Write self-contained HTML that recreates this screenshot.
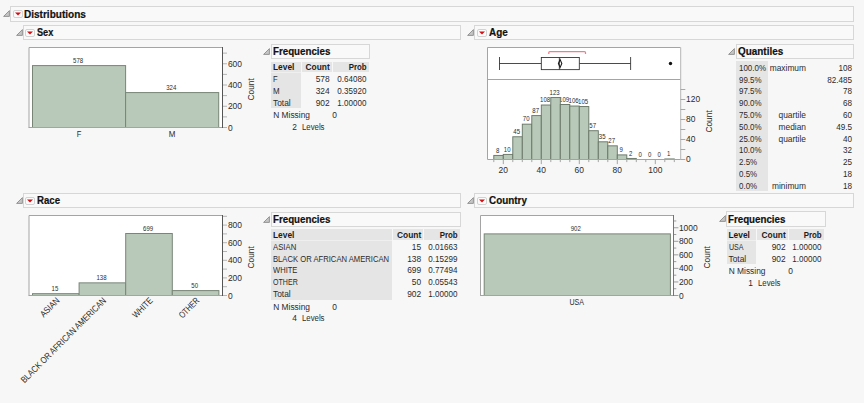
<!DOCTYPE html>
<html><head><meta charset="utf-8"><title>Distributions</title>
<style>
html,body{margin:0;padding:0;}
body{width:864px;height:403px;background:#f7f7f7;position:relative;overflow:hidden;font-family:"Liberation Sans",sans-serif;color:#2b2b2b;}
.abs{position:absolute;}
.hbox{box-sizing:border-box;border:1px solid #d7d7d7;background:#f9f9f9;}
.h1{font-weight:bold;font-size:10.6px;color:#111;white-space:nowrap;transform-origin:0 50%;-webkit-text-stroke:0.2px #111;}
.t{font-size:8.4px;white-space:nowrap;line-height:12px;height:12px;}
.b{font-weight:bold;color:#1c1c1c;}
.r{text-align:right;}
.sh{background:#e5e5e5;}
svg{overflow:visible;}
svg text{font-family:"Liberation Sans",sans-serif;fill:#2b2b2b;}
</style></head><body>

<svg class="abs" style="left:3px;top:9.8px" width="7" height="7" viewBox="0 0 7 7"><path d="M0.6 6.4 L6.4 6.4 L6.4 0.6 Z" fill="#c6c6c6" stroke="#8c8c8c" stroke-width="0.9"/></svg><div class="abs hbox" style="left:9.8px;top:5.8px;width:844.4px;height:15.8px"></div><svg class="abs" style="left:12.6px;top:9.5px" width="10" height="8" viewBox="0 0 10 8"><rect x="0.5" y="0.5" width="9" height="7" rx="1.5" ry="1.5" fill="#fbfbfb" stroke="#d2d2d2" stroke-width="1"/><path d="M2 2.6 L8 2.6 L5 5.6 Z" fill="#d40f14"/></svg><div class="abs h1" style="left:23.6px;top:5.8px;line-height:16.4px;transform:scaleX(0.947)">Distributions</div>
<svg class="abs" style="left:15.8px;top:28.9px" width="7" height="7" viewBox="0 0 7 7"><path d="M0.6 6.4 L6.4 6.4 L6.4 0.6 Z" fill="#c6c6c6" stroke="#8c8c8c" stroke-width="0.9"/></svg><div class="abs hbox" style="left:22.6px;top:24.9px;width:438.7px;height:15.6px"></div><svg class="abs" style="left:25.4px;top:28.6px" width="10" height="8" viewBox="0 0 10 8"><rect x="0.5" y="0.5" width="9" height="7" rx="1.5" ry="1.5" fill="#fbfbfb" stroke="#d2d2d2" stroke-width="1"/><path d="M2 2.6 L8 2.6 L5 5.6 Z" fill="#d40f14"/></svg><div class="abs h1" style="left:36.9px;top:23.9px;line-height:16.2px;transform:scaleX(0.862)">Sex</div>
<svg class="abs" style="left:467.3px;top:28.9px" width="7" height="7" viewBox="0 0 7 7"><path d="M0.6 6.4 L6.4 6.4 L6.4 0.6 Z" fill="#c6c6c6" stroke="#8c8c8c" stroke-width="0.9"/></svg><div class="abs hbox" style="left:474.1px;top:24.9px;width:380.1px;height:15.6px"></div><svg class="abs" style="left:476.9px;top:28.6px" width="10" height="8" viewBox="0 0 10 8"><rect x="0.5" y="0.5" width="9" height="7" rx="1.5" ry="1.5" fill="#fbfbfb" stroke="#d2d2d2" stroke-width="1"/><path d="M2 2.6 L8 2.6 L5 5.6 Z" fill="#d40f14"/></svg><div class="abs h1" style="left:488.9px;top:23.9px;line-height:16.2px;transform:scaleX(0.936)">Age</div>
<svg class="abs" style="left:15.8px;top:197.0px" width="7" height="7" viewBox="0 0 7 7"><path d="M0.6 6.4 L6.4 6.4 L6.4 0.6 Z" fill="#c6c6c6" stroke="#8c8c8c" stroke-width="0.9"/></svg><div class="abs hbox" style="left:22.6px;top:193.0px;width:438.7px;height:15.4px"></div><svg class="abs" style="left:25.4px;top:196.7px" width="10" height="8" viewBox="0 0 10 8"><rect x="0.5" y="0.5" width="9" height="7" rx="1.5" ry="1.5" fill="#fbfbfb" stroke="#d2d2d2" stroke-width="1"/><path d="M2 2.6 L8 2.6 L5 5.6 Z" fill="#d40f14"/></svg><div class="abs h1" style="left:36.9px;top:192.0px;line-height:16.0px;transform:scaleX(0.908)">Race</div>
<svg class="abs" style="left:467.3px;top:197.0px" width="7" height="7" viewBox="0 0 7 7"><path d="M0.6 6.4 L6.4 6.4 L6.4 0.6 Z" fill="#c6c6c6" stroke="#8c8c8c" stroke-width="0.9"/></svg><div class="abs hbox" style="left:474.1px;top:193.0px;width:380.1px;height:15.4px"></div><svg class="abs" style="left:476.9px;top:196.7px" width="10" height="8" viewBox="0 0 10 8"><rect x="0.5" y="0.5" width="9" height="7" rx="1.5" ry="1.5" fill="#fbfbfb" stroke="#d2d2d2" stroke-width="1"/><path d="M2 2.6 L8 2.6 L5 5.6 Z" fill="#d40f14"/></svg><div class="abs h1" style="left:488.8px;top:192.0px;line-height:16.0px;transform:scaleX(0.933)">Country</div>
<svg class="abs" style="left:0;top:0" width="864" height="403" viewBox="0 0 864 403"><rect x="29" y="47.5" width="193.5" height="80.0" fill="#fff" stroke="none"/>
<text transform="translate(78.15 62.99) scale(0.84 1)" font-size="7.2" text-anchor="middle">578</text>
<rect x="32.50" y="65.59" width="93.10" height="61.91" fill="#b9c9b9" stroke="#778576" stroke-width="1"/>
<text transform="translate(79.05 137.00) scale(0.831 1)" font-size="9.1" text-anchor="middle">F</text>
<text transform="translate(171.25 89.98) scale(0.84 1)" font-size="7.2" text-anchor="middle">324</text>
<rect x="125.60" y="92.58" width="93.10" height="34.92" fill="#b9c9b9" stroke="#778576" stroke-width="1"/>
<text transform="translate(172.15 137.00) scale(0.877 1)" font-size="9.1" text-anchor="middle">M</text>
<path d="M29 127.5 L29 47.5 L222.5 47.5" fill="none" stroke="#a4a4a4" stroke-width="1"/>
<line x1="28.5" y1="127.5" x2="222.5" y2="127.5" stroke="#a4a4a4" stroke-width="1"/>
<line x1="222.5" y1="127.50" x2="227.0" y2="127.50" stroke="#b4b4b4" stroke-width="1"/>
<text transform="translate(227.90 130.55) scale(0.93 1)" font-size="9.1" text-anchor="start">0</text>
<line x1="222.5" y1="116.88" x2="227.0" y2="116.88" stroke="#b4b4b4" stroke-width="1"/>
<line x1="222.5" y1="106.25" x2="227.0" y2="106.25" stroke="#b4b4b4" stroke-width="1"/>
<text transform="translate(227.90 109.30) scale(0.93 1)" font-size="9.1" text-anchor="start">200</text>
<line x1="222.5" y1="95.62" x2="227.0" y2="95.62" stroke="#b4b4b4" stroke-width="1"/>
<line x1="222.5" y1="85.00" x2="227.0" y2="85.00" stroke="#b4b4b4" stroke-width="1"/>
<text transform="translate(227.90 88.05) scale(0.93 1)" font-size="9.1" text-anchor="start">400</text>
<line x1="222.5" y1="74.38" x2="227.0" y2="74.38" stroke="#b4b4b4" stroke-width="1"/>
<line x1="222.5" y1="63.75" x2="227.0" y2="63.75" stroke="#b4b4b4" stroke-width="1"/>
<text transform="translate(227.90 66.80) scale(0.93 1)" font-size="9.1" text-anchor="start">600</text>
<line x1="222.5" y1="53.12" x2="227.0" y2="53.12" stroke="#b4b4b4" stroke-width="1"/>
<line x1="222.5" y1="47.0" x2="222.5" y2="128.0" stroke="#555" stroke-width="1"/>
<text x="250.8" y="89.3" font-size="8.4" text-anchor="middle" transform="rotate(-90 250.8 89.3)" dy="3">Count</text>
<rect x="29" y="215.5" width="193.5" height="80.0" fill="#fff" stroke="none"/>
<text transform="translate(54.90 291.08) scale(0.84 1)" font-size="7.2" text-anchor="middle">15</text>
<rect x="32.50" y="293.68" width="46.60" height="1.82" fill="#b9c9b9" stroke="#778576" stroke-width="1"/>
<text transform="translate(55.60 296.70) rotate(-45) scale(0.854 1)" font-size="9.1" text-anchor="end" dy="6.4">ASIAN</text>
<text transform="translate(101.50 280.26) scale(0.84 1)" font-size="7.2" text-anchor="middle">138</text>
<rect x="79.10" y="282.86" width="46.60" height="12.64" fill="#b9c9b9" stroke="#778576" stroke-width="1"/>
<text transform="translate(102.20 296.70) rotate(-45) scale(0.844 1)" font-size="9.1" text-anchor="end" dy="6.4">BLACK OR AFRICAN AMERICAN</text>
<text transform="translate(148.10 230.89) scale(0.84 1)" font-size="7.2" text-anchor="middle">699</text>
<rect x="125.70" y="233.49" width="46.60" height="62.01" fill="#b9c9b9" stroke="#778576" stroke-width="1"/>
<text transform="translate(148.80 296.70) rotate(-45) scale(0.835 1)" font-size="9.1" text-anchor="end" dy="6.4">WHITE</text>
<text transform="translate(194.70 288.00) scale(0.84 1)" font-size="7.2" text-anchor="middle">50</text>
<rect x="172.30" y="290.60" width="46.60" height="4.90" fill="#b9c9b9" stroke="#778576" stroke-width="1"/>
<text transform="translate(195.40 296.70) rotate(-45) scale(0.780 1)" font-size="9.1" text-anchor="end" dy="6.4">OTHER</text>
<path d="M29 295.5 L29 215.5 L222.5 215.5" fill="none" stroke="#a4a4a4" stroke-width="1"/>
<line x1="28.5" y1="295.5" x2="222.5" y2="295.5" stroke="#a4a4a4" stroke-width="1"/>
<line x1="222.5" y1="295.50" x2="227.0" y2="295.50" stroke="#b4b4b4" stroke-width="1"/>
<text transform="translate(227.90 298.55) scale(0.93 1)" font-size="9.1" text-anchor="start">0</text>
<line x1="222.5" y1="286.70" x2="227.0" y2="286.70" stroke="#b4b4b4" stroke-width="1"/>
<line x1="222.5" y1="277.90" x2="227.0" y2="277.90" stroke="#b4b4b4" stroke-width="1"/>
<text transform="translate(227.90 280.95) scale(0.93 1)" font-size="9.1" text-anchor="start">200</text>
<line x1="222.5" y1="269.10" x2="227.0" y2="269.10" stroke="#b4b4b4" stroke-width="1"/>
<line x1="222.5" y1="260.30" x2="227.0" y2="260.30" stroke="#b4b4b4" stroke-width="1"/>
<text transform="translate(227.90 263.35) scale(0.93 1)" font-size="9.1" text-anchor="start">400</text>
<line x1="222.5" y1="251.50" x2="227.0" y2="251.50" stroke="#b4b4b4" stroke-width="1"/>
<line x1="222.5" y1="242.70" x2="227.0" y2="242.70" stroke="#b4b4b4" stroke-width="1"/>
<text transform="translate(227.90 245.75) scale(0.93 1)" font-size="9.1" text-anchor="start">600</text>
<line x1="222.5" y1="233.90" x2="227.0" y2="233.90" stroke="#b4b4b4" stroke-width="1"/>
<line x1="222.5" y1="225.10" x2="227.0" y2="225.10" stroke="#b4b4b4" stroke-width="1"/>
<text transform="translate(227.90 228.15) scale(0.93 1)" font-size="9.1" text-anchor="start">800</text>
<line x1="222.5" y1="216.30" x2="227.0" y2="216.30" stroke="#b4b4b4" stroke-width="1"/>
<line x1="222.5" y1="215.0" x2="222.5" y2="296.0" stroke="#555" stroke-width="1"/>
<text x="251.3" y="257.3" font-size="8.4" text-anchor="middle" transform="rotate(-90 251.3 257.3)" dy="3">Count</text>
<rect x="480.5" y="215.5" width="193.0" height="80.0" fill="#fff" stroke="none"/>
<text transform="translate(575.80 231.29) scale(0.84 1)" font-size="7.2" text-anchor="middle">902</text>
<rect x="484.20" y="233.89" width="186.20" height="61.61" fill="#b9c9b9" stroke="#778576" stroke-width="1"/>
<text transform="translate(576.70 305.00) scale(0.780 1)" font-size="9.1" text-anchor="middle">USA</text>
<path d="M480.5 295.5 L480.5 215.5 L673.5 215.5" fill="none" stroke="#a4a4a4" stroke-width="1"/>
<line x1="480.0" y1="295.5" x2="673.5" y2="295.5" stroke="#a4a4a4" stroke-width="1"/>
<line x1="673.5" y1="295.50" x2="678.4" y2="295.50" stroke="#9c9c9c" stroke-width="1"/>
<text transform="translate(678.90 298.55) scale(0.93 1)" font-size="9.1" text-anchor="start">0</text>
<line x1="673.5" y1="288.73" x2="676.3" y2="288.73" stroke="#9c9c9c" stroke-width="1"/>
<line x1="673.5" y1="281.95" x2="678.4" y2="281.95" stroke="#9c9c9c" stroke-width="1"/>
<text transform="translate(678.90 285.00) scale(0.93 1)" font-size="9.1" text-anchor="start">200</text>
<line x1="673.5" y1="275.18" x2="676.3" y2="275.18" stroke="#9c9c9c" stroke-width="1"/>
<line x1="673.5" y1="268.40" x2="678.4" y2="268.40" stroke="#9c9c9c" stroke-width="1"/>
<text transform="translate(678.90 271.45) scale(0.93 1)" font-size="9.1" text-anchor="start">400</text>
<line x1="673.5" y1="261.62" x2="676.3" y2="261.62" stroke="#9c9c9c" stroke-width="1"/>
<line x1="673.5" y1="254.85" x2="678.4" y2="254.85" stroke="#9c9c9c" stroke-width="1"/>
<text transform="translate(678.90 257.90) scale(0.93 1)" font-size="9.1" text-anchor="start">600</text>
<line x1="673.5" y1="248.07" x2="676.3" y2="248.07" stroke="#9c9c9c" stroke-width="1"/>
<line x1="673.5" y1="241.30" x2="678.4" y2="241.30" stroke="#9c9c9c" stroke-width="1"/>
<text transform="translate(678.90 244.35) scale(0.93 1)" font-size="9.1" text-anchor="start">800</text>
<line x1="673.5" y1="234.53" x2="676.3" y2="234.53" stroke="#9c9c9c" stroke-width="1"/>
<line x1="673.5" y1="227.75" x2="678.4" y2="227.75" stroke="#9c9c9c" stroke-width="1"/>
<text transform="translate(678.90 230.80) scale(0.93 1)" font-size="9.1" text-anchor="start">1000</text>
<line x1="673.5" y1="220.97" x2="676.3" y2="220.97" stroke="#9c9c9c" stroke-width="1"/>
<line x1="673.5" y1="215.0" x2="673.5" y2="296.0" stroke="#747474" stroke-width="1"/>
<text x="706.7" y="257.3" font-size="8.4" text-anchor="middle" transform="rotate(-90 706.7 257.3)" dy="3">Count</text>
<rect x="487.5" y="47.5" width="193.0" height="112.0" fill="#fff"/>
<text transform="translate(497.65 152.62) scale(0.84 1)" font-size="7.2" text-anchor="middle">8</text>
<text transform="translate(507.15 151.61) scale(0.84 1)" font-size="7.2" text-anchor="middle">10</text>
<text transform="translate(516.65 133.97) scale(0.84 1)" font-size="7.2" text-anchor="middle">45</text>
<text transform="translate(526.15 121.37) scale(0.84 1)" font-size="7.2" text-anchor="middle">70</text>
<text transform="translate(535.65 112.80) scale(0.84 1)" font-size="7.2" text-anchor="middle">87</text>
<text transform="translate(545.15 102.22) scale(0.84 1)" font-size="7.2" text-anchor="middle">108</text>
<text transform="translate(554.65 94.66) scale(0.84 1)" font-size="7.2" text-anchor="middle">123</text>
<text transform="translate(564.15 101.71) scale(0.84 1)" font-size="7.2" text-anchor="middle">109</text>
<text transform="translate(573.65 103.23) scale(0.84 1)" font-size="7.2" text-anchor="middle">106</text>
<text transform="translate(583.15 103.73) scale(0.84 1)" font-size="7.2" text-anchor="middle">105</text>
<text transform="translate(592.65 127.92) scale(0.84 1)" font-size="7.2" text-anchor="middle">57</text>
<text transform="translate(602.15 139.01) scale(0.84 1)" font-size="7.2" text-anchor="middle">35</text>
<text transform="translate(611.65 143.04) scale(0.84 1)" font-size="7.2" text-anchor="middle">27</text>
<text transform="translate(621.15 152.11) scale(0.84 1)" font-size="7.2" text-anchor="middle">9</text>
<text transform="translate(630.65 155.64) scale(0.84 1)" font-size="7.2" text-anchor="middle">2</text>
<text transform="translate(640.15 156.65) scale(0.84 1)" font-size="7.2" text-anchor="middle">0</text>
<text transform="translate(649.65 156.65) scale(0.84 1)" font-size="7.2" text-anchor="middle">0</text>
<text transform="translate(659.15 156.65) scale(0.84 1)" font-size="7.2" text-anchor="middle">0</text>
<text transform="translate(668.65 156.15) scale(0.84 1)" font-size="7.2" text-anchor="middle">1</text>
<rect x="493.80" y="155.42" width="9.5" height="4.08" fill="#b9c9b9" stroke="#687767" stroke-width="0.95"/>
<rect x="503.30" y="154.41" width="9.5" height="5.09" fill="#b9c9b9" stroke="#687767" stroke-width="0.95"/>
<rect x="512.80" y="136.77" width="9.5" height="22.73" fill="#b9c9b9" stroke="#687767" stroke-width="0.95"/>
<rect x="522.30" y="124.17" width="9.5" height="35.33" fill="#b9c9b9" stroke="#687767" stroke-width="0.95"/>
<rect x="531.80" y="115.60" width="9.5" height="43.90" fill="#b9c9b9" stroke="#687767" stroke-width="0.95"/>
<rect x="541.30" y="105.02" width="9.5" height="54.48" fill="#b9c9b9" stroke="#687767" stroke-width="0.95"/>
<rect x="550.80" y="97.46" width="9.5" height="62.04" fill="#b9c9b9" stroke="#687767" stroke-width="0.95"/>
<rect x="560.30" y="104.51" width="9.5" height="54.99" fill="#b9c9b9" stroke="#687767" stroke-width="0.95"/>
<rect x="569.80" y="106.03" width="9.5" height="53.47" fill="#b9c9b9" stroke="#687767" stroke-width="0.95"/>
<rect x="579.30" y="106.53" width="9.5" height="52.97" fill="#b9c9b9" stroke="#687767" stroke-width="0.95"/>
<rect x="588.80" y="130.72" width="9.5" height="28.78" fill="#b9c9b9" stroke="#687767" stroke-width="0.95"/>
<rect x="598.30" y="141.81" width="9.5" height="17.69" fill="#b9c9b9" stroke="#687767" stroke-width="0.95"/>
<rect x="607.80" y="145.84" width="9.5" height="13.66" fill="#b9c9b9" stroke="#687767" stroke-width="0.95"/>
<rect x="617.30" y="154.91" width="9.5" height="4.59" fill="#b9c9b9" stroke="#687767" stroke-width="0.95"/>
<rect x="626.80" y="158.44" width="9.5" height="1.06" fill="#b9c9b9" stroke="#687767" stroke-width="0.95"/>
<rect x="664.80" y="158.95" width="9.5" height="0.55" fill="#b9c9b9" stroke="#687767" stroke-width="0.95"/>
<path d="M487.5 159.5 L487.5 47.5 L680.5 47.5" fill="none" stroke="#a4a4a4"/>
<line x1="487.5" y1="79.5" x2="680.5" y2="79.5" stroke="#a4a4a4"/>
<line x1="487.5" y1="159.5" x2="680.5" y2="159.5" stroke="#a4a4a4"/>
<line x1="680.7" y1="47.5" x2="680.7" y2="160.0" stroke="#b6b6b6"/>
<line x1="493.80" y1="159.5" x2="493.80" y2="162.1" stroke="#a4a4a4"/>
<line x1="503.30" y1="159.5" x2="503.30" y2="164.1" stroke="#a4a4a4"/>
<text transform="translate(503.30 173.30) scale(0.93 1)" font-size="9.1" text-anchor="middle">20</text>
<line x1="512.80" y1="159.5" x2="512.80" y2="162.1" stroke="#a4a4a4"/>
<line x1="522.30" y1="159.5" x2="522.30" y2="162.1" stroke="#a4a4a4"/>
<line x1="531.80" y1="159.5" x2="531.80" y2="162.1" stroke="#a4a4a4"/>
<line x1="541.30" y1="159.5" x2="541.30" y2="164.1" stroke="#a4a4a4"/>
<text transform="translate(541.30 173.30) scale(0.93 1)" font-size="9.1" text-anchor="middle">40</text>
<line x1="550.80" y1="159.5" x2="550.80" y2="162.1" stroke="#a4a4a4"/>
<line x1="560.30" y1="159.5" x2="560.30" y2="162.1" stroke="#a4a4a4"/>
<line x1="569.80" y1="159.5" x2="569.80" y2="162.1" stroke="#a4a4a4"/>
<line x1="579.30" y1="159.5" x2="579.30" y2="164.1" stroke="#a4a4a4"/>
<text transform="translate(579.30 173.30) scale(0.93 1)" font-size="9.1" text-anchor="middle">60</text>
<line x1="588.80" y1="159.5" x2="588.80" y2="162.1" stroke="#a4a4a4"/>
<line x1="598.30" y1="159.5" x2="598.30" y2="162.1" stroke="#a4a4a4"/>
<line x1="607.80" y1="159.5" x2="607.80" y2="162.1" stroke="#a4a4a4"/>
<line x1="617.30" y1="159.5" x2="617.30" y2="164.1" stroke="#a4a4a4"/>
<text transform="translate(617.30 173.30) scale(0.93 1)" font-size="9.1" text-anchor="middle">80</text>
<line x1="626.80" y1="159.5" x2="626.80" y2="162.1" stroke="#a4a4a4"/>
<line x1="636.30" y1="159.5" x2="636.30" y2="162.1" stroke="#a4a4a4"/>
<line x1="645.80" y1="159.5" x2="645.80" y2="162.1" stroke="#a4a4a4"/>
<line x1="655.30" y1="159.5" x2="655.30" y2="164.1" stroke="#a4a4a4"/>
<text transform="translate(655.30 173.30) scale(0.93 1)" font-size="9.1" text-anchor="middle">100</text>
<line x1="664.80" y1="159.5" x2="664.80" y2="162.1" stroke="#a4a4a4"/>
<line x1="674.30" y1="159.5" x2="674.30" y2="162.1" stroke="#a4a4a4"/>
<line x1="680.5" y1="159.5" x2="685.3" y2="159.5" stroke="#a8a8a8"/>
<text transform="translate(686.10 162.30) scale(0.93 1)" font-size="9.1" text-anchor="start">0</text>
<line x1="680.5" y1="149.5" x2="685.3" y2="149.5" stroke="#a8a8a8"/>
<line x1="680.5" y1="139.5" x2="685.3" y2="139.5" stroke="#a8a8a8"/>
<text transform="translate(686.10 142.30) scale(0.93 1)" font-size="9.1" text-anchor="start">40</text>
<line x1="680.5" y1="129.5" x2="685.3" y2="129.5" stroke="#a8a8a8"/>
<line x1="680.5" y1="119.5" x2="685.3" y2="119.5" stroke="#a8a8a8"/>
<text transform="translate(686.10 122.30) scale(0.93 1)" font-size="9.1" text-anchor="start">80</text>
<line x1="680.5" y1="109.5" x2="685.3" y2="109.5" stroke="#a8a8a8"/>
<line x1="680.5" y1="99.5" x2="685.3" y2="99.5" stroke="#a8a8a8"/>
<text transform="translate(686.10 102.30) scale(0.93 1)" font-size="9.1" text-anchor="start">120</text>
<line x1="680.5" y1="89.5" x2="685.3" y2="89.5" stroke="#a8a8a8"/>
<text x="709.4" y="121.4" font-size="8.4" text-anchor="middle" transform="rotate(-90 709.4 121.4)" dy="3">Count</text>
<line x1="499.50" y1="63.5" x2="541.30" y2="63.5" stroke="#2a2a2a" stroke-width="0.85"/>
<line x1="579.30" y1="63.5" x2="630.60" y2="63.5" stroke="#2a2a2a" stroke-width="0.85"/>
<line x1="499.50" y1="57.0" x2="499.50" y2="70.0" stroke="#2a2a2a" stroke-width="0.85"/>
<line x1="630.60" y1="57.0" x2="630.60" y2="70.0" stroke="#2a2a2a" stroke-width="0.85"/>
<rect x="541.30" y="57.5" width="38.00" height="12.15" fill="#fff" stroke="#2a2a2a" stroke-width="0.85"/>
<line x1="559.35" y1="57.5" x2="559.35" y2="69.5" stroke="#2a2a2a" stroke-width="0.85"/>
<path d="M558.41 63.5 L560.11 59.6 L561.81 63.5 L560.11 67.4 Z" fill="none" stroke="#1a1a1a" stroke-width="1.1"/>
<circle cx="670.50" cy="63.5" r="1.7" fill="#111"/>
<path d="M548.8 54 L548.8 52.5 Q548.8 51.6 549.8 51.6 L584.5 51.6 Q585.5 51.6 585.5 52.5 L585.5 54" fill="none" stroke="#f37c8b" stroke-width="1.25"/></svg>
<svg class="abs" style="left:263.0px;top:48px" width="7" height="7" viewBox="0 0 7 7"><path d="M0.6 6.4 L6.4 6.4 L6.4 0.6 Z" fill="#c6c6c6" stroke="#8c8c8c" stroke-width="0.9"/></svg><div class="abs hbox" style="left:270.5px;top:44px;width:99.5px;height:14.5px"></div><div class="abs h1" style="left:272.5px;top:44px;line-height:15.5px;transform:scaleX(0.92)">Frequencies</div><div class="abs sh" style="left:271.2px;top:61.7px;width:29.5px;height:10.5px"></div><div class="abs sh" style="left:301.7px;top:61.7px;width:30px;height:10.5px"></div><div class="abs sh" style="left:332.7px;top:61.7px;width:36px;height:10.5px"></div><div class="abs sh" style="left:271.2px;top:72.2px;width:29.5px;height:36.2px"></div><div class="abs" style="left:271.2px;top:71.7px;width:29.5px;height:1px;background:#efefef"></div><div class="abs t b" style="left:273.0px;top:60.7px">Level</div><div class="abs t b r" style="left:301.7px;width:28px;top:60.7px">Count</div><div class="abs t b r" style="left:332.7px;width:33.6px;top:60.7px;transform:scaleX(0.94);transform-origin:100% 50%">Prob</div><div class="abs t" style="left:273.0px;top:72.9px"><span style="display:inline-block;transform:scaleX(0.9);transform-origin:0 50%">F</span></div><div class="abs t r" style="left:301.7px;width:28px;top:72.9px">578</div><div class="abs t r" style="left:332.7px;width:33.4px;top:72.9px;transform:scaleX(0.96);transform-origin:100% 50%">0.64080</div><div class="abs t" style="left:273.0px;top:84.7px"><span style="display:inline-block;transform:scaleX(0.95);transform-origin:0 50%">M</span></div><div class="abs t r" style="left:301.7px;width:28px;top:84.7px">324</div><div class="abs t r" style="left:332.7px;width:33.4px;top:84.7px;transform:scaleX(0.96);transform-origin:100% 50%">0.35920</div><div class="abs t" style="left:273.0px;top:96.5px">Total</div><div class="abs t r" style="left:301.7px;width:28px;top:96.5px">902</div><div class="abs t r" style="left:332.7px;width:33.4px;top:96.5px;transform:scaleX(0.96);transform-origin:100% 50%">1.00000</div><div class="abs t" style="left:273.2px;top:109.1px">N Missing</div><div class="abs t r" style="left:317px;width:20px;top:109.1px">0</div><div class="abs t r" style="left:277px;width:20px;top:120.5px">2</div><div class="abs t" style="left:302px;top:120.5px;transform:scaleX(0.93);transform-origin:0 50%">Levels</div>
<svg class="abs" style="left:263.0px;top:215.7px" width="7" height="7" viewBox="0 0 7 7"><path d="M0.6 6.4 L6.4 6.4 L6.4 0.6 Z" fill="#c6c6c6" stroke="#8c8c8c" stroke-width="0.9"/></svg><div class="abs hbox" style="left:270.5px;top:211.7px;width:190.5px;height:15.3px"></div><div class="abs h1" style="left:272.5px;top:211.7px;line-height:15.5px;transform:scaleX(0.92)">Frequencies</div><div class="abs sh" style="left:271.2px;top:229px;width:121px;height:11px"></div><div class="abs sh" style="left:393.2px;top:229px;width:30px;height:11px"></div><div class="abs sh" style="left:424.2px;top:229px;width:36px;height:11px"></div><div class="abs sh" style="left:271.2px;top:240.1px;width:121px;height:59.8px"></div><div class="abs" style="left:271.2px;top:239.6px;width:121px;height:1px;background:#efefef"></div><div class="abs t b" style="left:273.0px;top:228.6px">Level</div><div class="abs t b r" style="left:393.2px;width:28px;top:228.6px">Count</div><div class="abs t b r" style="left:424.2px;width:33.6px;top:228.6px;transform:scaleX(0.94);transform-origin:100% 50%">Prob</div><div class="abs t" style="left:273.0px;top:240.8px"><span style="display:inline-block;transform:scaleX(0.925);transform-origin:0 50%">ASIAN</span></div><div class="abs t r" style="left:393.2px;width:28px;top:240.8px">15</div><div class="abs t r" style="left:424.2px;width:33.4px;top:240.8px;transform:scaleX(0.96);transform-origin:100% 50%">0.01663</div><div class="abs t" style="left:273.0px;top:252.6px"><span style="display:inline-block;transform:scaleX(0.914);transform-origin:0 50%">BLACK OR AFRICAN AMERICAN</span></div><div class="abs t r" style="left:393.2px;width:28px;top:252.6px">138</div><div class="abs t r" style="left:424.2px;width:33.4px;top:252.6px;transform:scaleX(0.96);transform-origin:100% 50%">0.15299</div><div class="abs t" style="left:273.0px;top:264.4px"><span style="display:inline-block;transform:scaleX(0.905);transform-origin:0 50%">WHITE</span></div><div class="abs t r" style="left:393.2px;width:28px;top:264.4px">699</div><div class="abs t r" style="left:424.2px;width:33.4px;top:264.4px;transform:scaleX(0.96);transform-origin:100% 50%">0.77494</div><div class="abs t" style="left:273.0px;top:276.2px"><span style="display:inline-block;transform:scaleX(0.845);transform-origin:0 50%">OTHER</span></div><div class="abs t r" style="left:393.2px;width:28px;top:276.2px">50</div><div class="abs t r" style="left:424.2px;width:33.4px;top:276.2px;transform:scaleX(0.96);transform-origin:100% 50%">0.05543</div><div class="abs t" style="left:273.0px;top:288.0px">Total</div><div class="abs t r" style="left:393.2px;width:28px;top:288.0px">902</div><div class="abs t r" style="left:424.2px;width:33.4px;top:288.0px;transform:scaleX(0.96);transform-origin:100% 50%">1.00000</div><div class="abs t" style="left:273.2px;top:300.6px">N Missing</div><div class="abs t r" style="left:317px;width:20px;top:300.6px">0</div><div class="abs t r" style="left:277px;width:20px;top:312.0px">4</div><div class="abs t" style="left:302px;top:312.0px;transform:scaleX(0.93);transform-origin:0 50%">Levels</div>
<svg class="abs" style="left:718.5px;top:215.4px" width="7" height="7" viewBox="0 0 7 7"><path d="M0.6 6.4 L6.4 6.4 L6.4 0.6 Z" fill="#c6c6c6" stroke="#8c8c8c" stroke-width="0.9"/></svg><div class="abs hbox" style="left:726px;top:211.4px;width:99.5px;height:15.6px"></div><div class="abs h1" style="left:728px;top:212.4px;line-height:15.5px;transform:scaleX(0.92)">Frequencies</div><div class="abs sh" style="left:726.7px;top:229px;width:29.5px;height:11px"></div><div class="abs sh" style="left:757.2px;top:229px;width:30.5px;height:11px"></div><div class="abs sh" style="left:788.7px;top:229px;width:35px;height:11px"></div><div class="abs sh" style="left:726.7px;top:240.1px;width:29.5px;height:24.4px"></div><div class="abs" style="left:726.7px;top:239.6px;width:29.5px;height:1px;background:#efefef"></div><div class="abs t b" style="left:728.5px;top:228.6px">Level</div><div class="abs t b r" style="left:757.2px;width:28.5px;top:228.6px">Count</div><div class="abs t b r" style="left:788.7px;width:32.6px;top:228.6px;transform:scaleX(0.94);transform-origin:100% 50%">Prob</div><div class="abs t" style="left:728.5px;top:240.8px"><span style="display:inline-block;transform:scaleX(0.845);transform-origin:0 50%">USA</span></div><div class="abs t r" style="left:757.2px;width:28.5px;top:240.8px">902</div><div class="abs t r" style="left:788.7px;width:32.4px;top:240.8px;transform:scaleX(0.96);transform-origin:100% 50%">1.00000</div><div class="abs t" style="left:728.5px;top:252.6px">Total</div><div class="abs t r" style="left:757.2px;width:28.5px;top:252.6px">902</div><div class="abs t r" style="left:788.7px;width:32.4px;top:252.6px;transform:scaleX(0.96);transform-origin:100% 50%">1.00000</div><div class="abs t" style="left:728.7px;top:265.2px">N Missing</div><div class="abs t r" style="left:773px;width:20px;top:265.2px">0</div><div class="abs t r" style="left:733px;width:20px;top:276.6px">1</div><div class="abs t" style="left:758px;top:276.6px;transform:scaleX(0.93);transform-origin:0 50%">Levels</div>
<svg class="abs" style="left:728.2px;top:48px" width="7" height="7" viewBox="0 0 7 7"><path d="M0.6 6.4 L6.4 6.4 L6.4 0.6 Z" fill="#c6c6c6" stroke="#8c8c8c" stroke-width="0.9"/></svg><div class="abs hbox" style="left:735.7px;top:44px;width:118.3px;height:14.5px"></div><div class="abs h1" style="left:737.7px;top:44px;line-height:15.5px;transform:scaleX(0.936)">Quantiles</div>
<div class="abs sh" style="left:736px;top:61px;width:31.5px;height:130px"></div>
<div class="abs t" style="left:738.6px;top:61.9px;transform:scaleX(0.95);transform-origin:0 50%">100.0%</div>
<div class="abs t r" style="left:760px;width:46px;top:61.9px">maximum</div>
<div class="abs t r" style="left:810px;width:42px;top:61.9px;transform:scaleX(0.97);transform-origin:100% 50%">108</div>
<div class="abs t" style="left:738.6px;top:73.7px;transform:scaleX(0.95);transform-origin:0 50%">99.5%</div>
<div class="abs t r" style="left:810px;width:42px;top:73.7px;transform:scaleX(0.97);transform-origin:100% 50%">82.485</div>
<div class="abs t" style="left:738.6px;top:85.4px;transform:scaleX(0.95);transform-origin:0 50%">97.5%</div>
<div class="abs t r" style="left:810px;width:42px;top:85.4px;transform:scaleX(0.97);transform-origin:100% 50%">78</div>
<div class="abs t" style="left:738.6px;top:97.2px;transform:scaleX(0.95);transform-origin:0 50%">90.0%</div>
<div class="abs t r" style="left:810px;width:42px;top:97.2px;transform:scaleX(0.97);transform-origin:100% 50%">68</div>
<div class="abs t" style="left:738.6px;top:108.9px;transform:scaleX(0.95);transform-origin:0 50%">75.0%</div>
<div class="abs t r" style="left:760px;width:46px;top:108.9px">quartile</div>
<div class="abs t r" style="left:810px;width:42px;top:108.9px;transform:scaleX(0.97);transform-origin:100% 50%">60</div>
<div class="abs t" style="left:738.6px;top:120.7px;transform:scaleX(0.95);transform-origin:0 50%">50.0%</div>
<div class="abs t r" style="left:760px;width:46px;top:120.7px">median</div>
<div class="abs t r" style="left:810px;width:42px;top:120.7px;transform:scaleX(0.97);transform-origin:100% 50%">49.5</div>
<div class="abs t" style="left:738.6px;top:132.5px;transform:scaleX(0.95);transform-origin:0 50%">25.0%</div>
<div class="abs t r" style="left:760px;width:46px;top:132.5px">quartile</div>
<div class="abs t r" style="left:810px;width:42px;top:132.5px;transform:scaleX(0.97);transform-origin:100% 50%">40</div>
<div class="abs t" style="left:738.6px;top:144.2px;transform:scaleX(0.95);transform-origin:0 50%">10.0%</div>
<div class="abs t r" style="left:810px;width:42px;top:144.2px;transform:scaleX(0.97);transform-origin:100% 50%">32</div>
<div class="abs t" style="left:738.6px;top:156.0px;transform:scaleX(0.95);transform-origin:0 50%">2.5%</div>
<div class="abs t r" style="left:810px;width:42px;top:156.0px;transform:scaleX(0.97);transform-origin:100% 50%">25</div>
<div class="abs t" style="left:738.6px;top:167.7px;transform:scaleX(0.95);transform-origin:0 50%">0.5%</div>
<div class="abs t r" style="left:810px;width:42px;top:167.7px;transform:scaleX(0.97);transform-origin:100% 50%">18</div>
<div class="abs t" style="left:738.6px;top:179.5px;transform:scaleX(0.95);transform-origin:0 50%">0.0%</div>
<div class="abs t r" style="left:760px;width:46px;top:179.5px">minimum</div>
<div class="abs t r" style="left:810px;width:42px;top:179.5px;transform:scaleX(0.97);transform-origin:100% 50%">18</div>
</body></html>
